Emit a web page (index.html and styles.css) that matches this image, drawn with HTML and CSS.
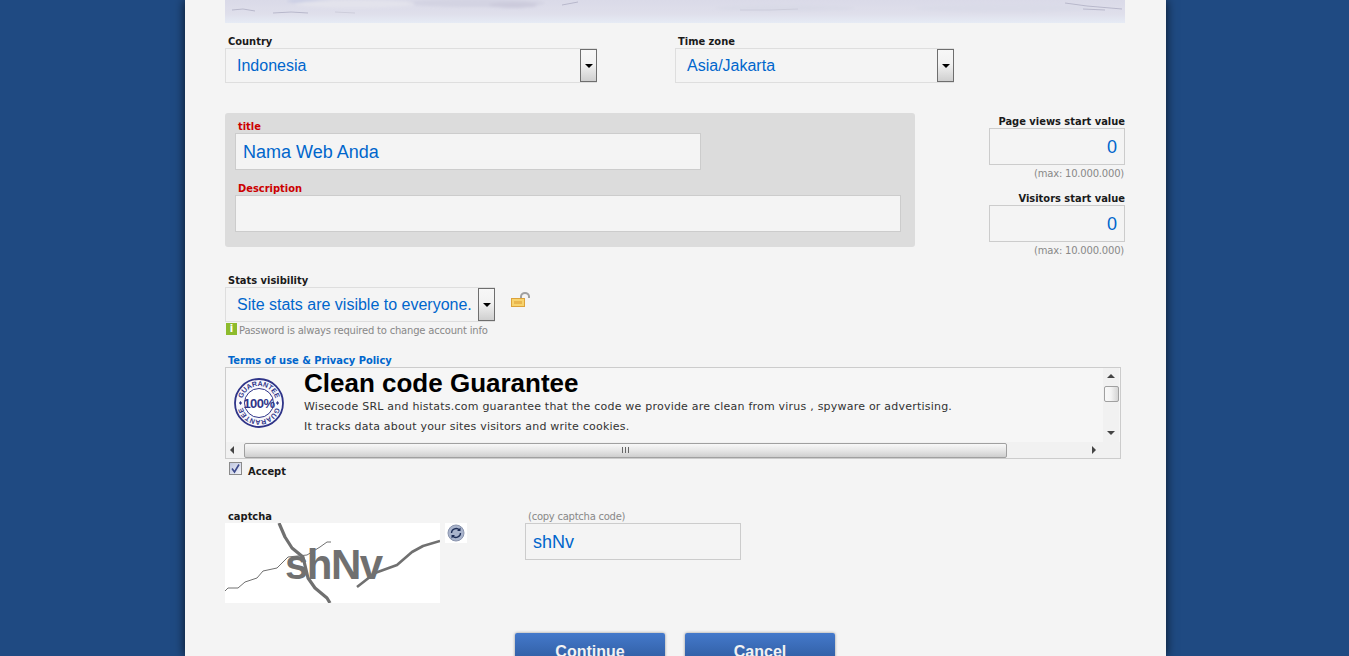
FILE: index.html
```html
<!DOCTYPE html>
<html lang="en">
  <head>
    <meta charset="UTF-8" />
    <meta name="viewport" content="width=device-width, initial-scale=1.0" />
    <title>Histats - Add site</title>
    <link rel="stylesheet" href="styles.css">
  </head>
  <body>
    <div class="page">
      <!-- Header picture, only the bottom edge is in view -->
      <div class="banner">
        <svg width="900" height="23" viewBox="0 0 900 23">
          <defs>
            <filter id="soft" x="-10%" y="-100%" width="120%" height="300%"><feGaussianBlur stdDeviation="1.4" /></filter>
            <filter id="softer" x="-10%" y="-100%" width="120%" height="300%"><feGaussianBlur stdDeviation="0.7" /></filter>
          </defs>
          <g filter="url(#soft)">
            <ellipse cx="250" cy="3" rx="70" ry="4" fill="#d3d3e2" />
            <ellipse cx="288" cy="5" rx="24" ry="3" fill="#cccbdc" />
            <ellipse cx="84" cy="1" rx="22" ry="2" fill="#c8cce4" />
            <ellipse cx="130" cy="4" rx="60" ry="4" fill="#e3e3ec" />
            <ellipse cx="560" cy="8" rx="70" ry="3" fill="#d9dae7" />
            <ellipse cx="780" cy="8" rx="90" ry="4" fill="#dadbe8" />
          </g>
          <g filter="url(#softer)" fill="none" stroke="#b8b8cb" stroke-width="1">
            <path d="M7 10 L18 9 L30 11" />
            <path d="M48 13 L66 12 L83 13" />
            <path d="M337 5 L353 2" />
            <path d="M110 12 L130 13" stroke="#cdcddb" />
            <path d="M515 10 L545 10 L573 9" stroke="#cdcddb" />
            <path d="M840 3 L862 6 L897 9" />
            <path d="M858 9 L880 10" />
          </g>
        </svg>
      </div>

      <!-- Country and time zone -->
      <div class="row-location">
        <div class="field field-country">
          <label class="label">Country</label>
          <div class="select">
            <span class="select-value">Indonesia</span>
            <span class="select-btn"><i class="arrow"></i></span>
          </div>
        </div>
        <div class="field field-zone">
          <label class="label">Time zone</label>
          <div class="select">
            <span class="select-value">Asia/Jakarta</span>
            <span class="select-btn"><i class="arrow"></i></span>
          </div>
        </div>
      </div>

      <!-- Title, description and start values -->
      <div class="row-site">
        <div class="site-panel">
          <label class="label label-red">title</label>
          <input class="input input-title" type="text" value="Nama Web Anda" />
          <label class="label label-red label-desc">Description</label>
          <input class="input input-desc" type="text" />
        </div>
        <div class="counters">
          <label class="label">Page views start value</label>
          <input class="input input-count" type="text" value="0" />
          <span class="max-note">(max: 10.000.000)</span>
          <label class="label label-visitors">Visitors start value</label>
          <input class="input input-count" type="text" value="0" />
          <span class="max-note">(max: 10.000.000)</span>
        </div>
      </div>

      <!-- Stats visibility -->
      <div class="row-visibility">
        <label class="label">Stats visibility</label>
        <div class="visibility-line">
          <div class="select select-visibility">
            <span class="select-value">Site stats are visible to everyone.</span>
            <span class="select-btn"><i class="arrow"></i></span>
          </div>
          <svg class="lock" width="20" height="16" viewBox="0 0 20 16">
            <path d="M10 6 V4.5 a4 3.5 0 0 1 8 0 V6" fill="none" stroke="#a0a0a0" stroke-width="2" />
            <rect x="0.5" y="6.5" width="13" height="8" fill="#f7d36d" stroke="#dca23a" />
            <rect x="3" y="9" width="8" height="3" fill="#e9b64e" />
          </svg>
        </div>
        <div class="hint">
          <span class="hint-icon">i</span>
          <span class="hint-text">Password is always required to change account info</span>
        </div>
      </div>

      <!-- Terms box -->
      <div class="row-terms">
        <label class="label label-blue">Terms of use &amp; Privacy Policy</label>
        <div class="terms-box">
          <div class="terms-main">
            <div class="terms-content">
              <svg class="stamp" width="50" height="50" viewBox="0 0 50 50">
                <defs>
                  <path id="stampArc" d="M8 25 A17 17 0 0 1 42 25 A17 17 0 0 1 8 25" />
                </defs>
                <circle cx="25" cy="25" r="24" fill="#f8f8fc" stroke="#2f3488" stroke-width="1.8" />
                <circle cx="25" cy="25" r="14.5" fill="#fff" stroke="#2f3488" stroke-width="1" />
                <text class="stamp-ring"><textPath href="#stampArc" startOffset="25%" text-anchor="middle">GUARANTEE</textPath></text>
                <text class="stamp-ring"><textPath href="#stampArc" startOffset="75%" text-anchor="middle">GUARANTEE</textPath></text>
                <path d="M5 25 l1.5 -2 l1.5 2 l-1.5 2 Z M42 25 l1.5 -2 l1.5 2 l-1.5 2 Z" fill="#2f3488" />
                <text class="stamp-big" x="25" y="29.5" text-anchor="middle">100%</text>
              </svg>
              <div class="terms-text">
                <h1>Clean code Guarantee</h1>
                <p>Wisecode SRL and histats.com guarantee that the code we provide are clean from virus , spyware or advertising.</p>
                <p>It tracks data about your sites visitors and write cookies.</p>
              </div>
            </div>
            <div class="vbar">
              <i class="tri tri-up"></i>
              <span class="vthumb"></span>
              <i class="tri tri-down"></i>
            </div>
          </div>
          <div class="hbar">
            <i class="tri tri-left"></i>
            <span class="hthumb"><b class="grip"></b></span>
            <i class="tri tri-right"></i>
          </div>
        </div>
        <div class="accept">
          <span class="check">
            <svg width="11" height="11" viewBox="0 0 11 11"><path d="M2 5.5 L4.5 9 L9 1.5" fill="none" stroke="#3d4a8c" stroke-width="1.6" /></svg>
          </span>
          <label class="label">Accept</label>
        </div>
      </div>

      <!-- Captcha -->
      <div class="row-captcha">
        <div class="captcha-left">
          <label class="label">captcha</label>
          <div class="captcha-line">
            <svg class="captcha-img" width="215" height="80" viewBox="0 0 215 80">
              <rect width="215" height="80" fill="#fff" />
              <g fill="none" stroke="#707070" stroke-linejoin="round">
                <path d="M0 68 L3 65 L13 65 L20 59 L32 55 L38 48 L52 45 L63 34 L82 32 L95 24 L102 19 L106 19" stroke-width="1" />
                <path d="M54 0 L60 14 L67 25 L78 34 L83 55 L90 65 L102 75 L105 80" stroke-width="3.2" />
                <path d="M132 64 L150 50 L172 42 L187 29 L198 23 L215 18" stroke-width="2.6" />
              </g>
              <text class="captcha-code" x="60" y="56">shNv</text>
            </svg>
            <span class="refresh">
              <svg width="18" height="18" viewBox="0 0 18 18">
                <circle cx="9" cy="9" r="8" fill="#a9b4cc" stroke="#8a94ad" />
                <path d="M4.5 9 a4.5 4.5 0 0 1 8 -2.8 M13.5 9 a4.5 4.5 0 0 1 -8 2.8" fill="none" stroke="#1c2c55" stroke-width="1.3" />
                <path d="M13.5 3.5 V7 H10 Z M4.5 14.5 V11 H8 Z" fill="#1c2c55" />
              </svg>
            </span>
          </div>
        </div>
        <div class="captcha-right">
          <label class="copy-label">(copy captcha code)</label>
          <input class="input input-captcha" type="text" value="shNv" />
        </div>
      </div>

      <!-- Buttons are cut off by the window -->
      <div class="row-buttons">
        <button class="btn" type="button">Continue</button>
        <button class="btn" type="button">Cancel</button>
      </div>
    </div>
  </body>
</html>
```

FILE: styles.css
```css
html,
body {
  height: 656px;
  overflow: hidden;
}

body {
  margin: 0;
  padding: 0;
  background-color: #1f4a82;
  font-family: "Liberation Sans", Arial, sans-serif;
}

.page {
  box-sizing: border-box;
  width: 981px;
  height: 656px;
  margin-left: 185px;
  padding: 0 41px 0 40px;
  overflow: hidden;
  background-color: #f4f4f4;
  box-shadow: 0 0 10px rgba(0, 0, 0, 0.75);
}

.banner {
  height: 23px;
  background: linear-gradient(#dadae8, #dfdfeb 60%, #e6ebf5);
}

.banner svg {
  display: block;
}

.label {
  display: block;
  padding-left: 3px;
  font-family: "DejaVu Sans Condensed", "DejaVu Sans", Verdana, sans-serif;
  font-size: 11px;
  font-weight: bold;
  line-height: 13px;
  color: #1a1a1a;
}

.label-red {
  color: #cc0000;
}

.label-blue {
  color: #0066cc;
}

.input {
  display: block;
  box-sizing: border-box;
  margin: 0;
  padding: 1px 7px 0;
  border: 1px solid #cccccc;
  background-color: #f4f4f4;
  font-family: "Liberation Sans", Arial, sans-serif;
  font-size: 18px;
  color: #0066cc;
  outline: none;
}

/* selects */
.select {
  box-sizing: border-box;
  display: flex;
  align-items: center;
  justify-content: space-between;
  height: 35px;
  border: 1px solid #dedede;
  background-color: #f4f4f4;
}

.select-value {
  padding-left: 11px;
  font-size: 16px;
  color: #0066cc;
}

.select-btn {
  box-sizing: border-box;
  display: flex;
  align-items: center;
  justify-content: center;
  width: 17px;
  height: 33px;
  margin-right: -1px;
  border: 1px solid #6e6e6e;
  background: linear-gradient(#f7f7f7, #f2f2f2 45%, #cfcfcf);
}

.arrow {
  width: 0;
  height: 0;
  border-left: 4px solid transparent;
  border-right: 4px solid transparent;
  border-top: 4px solid #000;
}

/* rows */
.row-location {
  display: flex;
  gap: 78px;
  margin-top: 12px;
}

.field-country {
  width: 372px;
}

.field-zone {
  width: 279px;
}

.row-site {
  display: flex;
  justify-content: space-between;
  margin-top: 30px;
}

.site-panel {
  box-sizing: border-box;
  width: 690px;
  height: 134px;
  padding: 7px 10px 0;
  border-radius: 3px;
  background-color: #dcdcdc;
}

.input-title {
  width: 466px;
  height: 37px;
}

.label-desc {
  margin-top: 12px;
}

.input-desc {
  width: 666px;
  height: 37px;
}

.counters {
  display: flex;
  flex-direction: column;
  align-items: flex-end;
  padding-top: 2px;
}

.counters .label {
  padding-left: 0;
}

.input-count {
  width: 136px;
  height: 37px;
  text-align: right;
}

.max-note {
  margin-top: 3px;
  padding-right: 1px;
  font-family: "DejaVu Sans", Verdana, sans-serif;
  font-size: 10px;
  letter-spacing: -0.2px;
  line-height: 12px;
  color: #888888;
}

.label-visitors {
  margin-top: 12px;
}

.row-visibility {
  margin-top: 17px;
}

.visibility-line {
  display: flex;
  align-items: flex-start;
  gap: 16px;
}

.select-visibility {
  width: 270px;
}

.lock {
  margin-top: 5px;
}

.hint {
  display: flex;
  align-items: center;
  gap: 2px;
  height: 13px;
  padding-left: 1px;
  font-family: "DejaVu Sans", Verdana, sans-serif;
  font-size: 10px;
  letter-spacing: -0.2px;
  color: #888888;
}

.hint-icon {
  width: 11px;
  height: 12px;
  background-color: #8dbb2c;
  font-size: 10px;
  font-weight: bold;
  letter-spacing: 0;
  line-height: 12px;
  text-align: center;
  color: #fff;
}

.hint-text {
  padding-top: 3px;
}

/* terms box */
.row-terms {
  margin-top: 19px;
}

.terms-box {
  box-sizing: border-box;
  width: 896px;
  height: 92px;
  border: 1px solid #cccccc;
  background-color: #f6f6f6;
}

.terms-main {
  display: flex;
  height: 74px;
}

.terms-content {
  display: flex;
  flex: 1;
  overflow: hidden;
}

.stamp {
  flex: none;
  margin: 10px 0 0 8px;
}

.stamp-ring {
  font-family: "Liberation Sans", Arial, sans-serif;
  font-size: 7px;
  font-weight: bold;
  fill: #2f3488;
}

.stamp-big {
  font-family: "Liberation Sans", Arial, sans-serif;
  font-size: 13px;
  font-weight: bold;
  letter-spacing: -0.5px;
  fill: #2f3488;
}

.terms-text {
  margin-left: 20px;
  white-space: nowrap;
}

.terms-text h1 {
  margin: 2px 0 1px;
  font-size: 26px;
  line-height: 26px;
  color: #000;
}

.terms-text p {
  margin: 0;
  font-family: "DejaVu Sans", Verdana, sans-serif;
  font-size: 11px;
  letter-spacing: 0.22px;
  line-height: 20px;
  color: #333333;
}

.vbar {
  display: flex;
  flex: none;
  flex-direction: column;
  align-items: center;
  box-sizing: border-box;
  width: 16px;
  margin-right: 1px;
  padding: 6px 0 7px;
  background-color: #f1f1f1;
}

.vthumb {
  box-sizing: border-box;
  width: 15px;
  height: 16px;
  margin-top: 8px;
  border: 1px solid #a0a0a0;
  border-radius: 2px;
  background: linear-gradient(90deg, #f8f8f8, #f4f4f4 45%, #d4d4d4);
}

.hbar {
  display: flex;
  align-items: center;
  height: 16px;
  padding: 0 24px 0 4px;
  background-color: #f1f1f1;
}

.hthumb {
  box-sizing: border-box;
  display: flex;
  align-items: center;
  justify-content: center;
  width: 763px;
  height: 15px;
  margin-left: 10px;
  margin-right: auto;
  border: 1px solid #a0a0a0;
  border-radius: 2px;
  background: linear-gradient(#f8f8f8, #e8e8e8 45%, #cecece);
}

.grip {
  width: 7px;
  height: 6px;
  background: repeating-linear-gradient(90deg, #666 0, #666 1px, transparent 1px, transparent 3px);
}

.tri {
  width: 0;
  height: 0;
  border: 4px solid transparent;
}

.tri-up {
  border-top: 0;
  border-bottom-color: #444;
}

.tri-down {
  margin-top: auto;
  border-bottom: 0;
  border-top-color: #444;
}

.tri-left {
  border-left: 0;
  border-right-color: #444;
}

.tri-right {
  border-right: 0;
  border-left-color: #444;
}

.accept {
  display: flex;
  align-items: center;
  height: 13px;
  margin-top: 3px;
  padding-left: 4px;
}

.check {
  box-sizing: border-box;
  display: flex;
  width: 13px;
  height: 13px;
  margin-right: 3px;
  border: 1px solid #8a8a8a;
  background: linear-gradient(135deg, #bfc6e0, #f2f3f8);
}

.accept .label {
  margin-top: 5px;
}

/* captcha */
.row-captcha {
  display: flex;
  margin-top: 35px;
}

.captcha-left {
  width: 300px;
}

.captcha-line {
  display: flex;
  align-items: flex-start;
  gap: 5px;
}

.captcha-img {
  display: block;
}

.captcha-code {
  font-family: "Liberation Sans", Arial, sans-serif;
  font-size: 42px;
  font-weight: bold;
  letter-spacing: -1.5px;
  fill: #707070;
}

.refresh {
  display: flex;
  align-items: center;
  justify-content: center;
  width: 22px;
  height: 20px;
  background-color: #fff;
}

.copy-label {
  display: block;
  padding-left: 3px;
  font-family: "DejaVu Sans", Verdana, sans-serif;
  font-size: 10px;
  letter-spacing: -0.25px;
  line-height: 13px;
  color: #888888;
}

.input-captcha {
  width: 216px;
  height: 37px;
}

/* buttons */
.row-buttons {
  display: flex;
  justify-content: center;
  gap: 20px;
  margin-top: 30px;
}

.btn {
  width: 150px;
  height: 36px;
  padding: 2px 0 0;
  border: 0;
  border-radius: 2px;
  background: linear-gradient(#4479cb, #2a5596);
  box-shadow: 0 0 3px rgba(0, 0, 0, 0.4);
  font-family: "Liberation Sans", Arial, sans-serif;
  font-size: 16px;
  font-weight: bold;
  color: #f2f2f2;
}
```
